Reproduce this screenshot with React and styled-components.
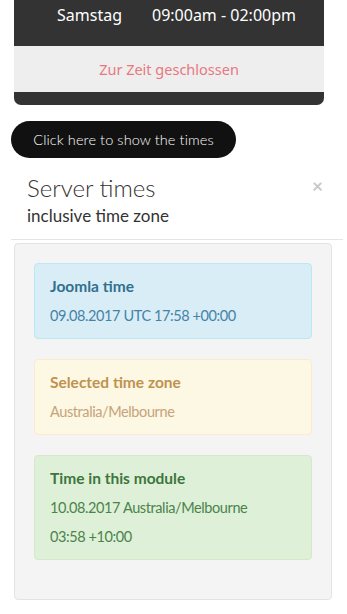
import styled, { createGlobalStyle } from "styled-components";

const Global = createGlobalStyle`
  body {
    margin: 0;
    background: #fff;
    font-family: Lato, "Open Sans", sans-serif;
  }
`;

const Page = styled.div`
  width: 347px;
  display: flex;
  flex-direction: column;
`;

const Hours = styled.div`
  margin: 0 23px 0 14px;
  background: #333;
  border-radius: 0 0 7px 7px;
  padding-bottom: 13px;
  font-family: "Noto Sans", "Open Sans", sans-serif;
`;

const HoursRow = styled.div`
  height: 46px;
  display: flex;
  align-items: flex-start;
  padding-top: 4px;
  box-sizing: border-box;
  color: #fff;
  font-size: 16px;
  line-height: 22px;

  span:first-child {
    width: 95px;
    padding-left: 43px;
  }
`;

const Closed = styled.div`
  height: 46px;
  background: #eee;
  color: #e8787e;
  font-size: 14.5px;
  display: flex;
  align-items: center;
  justify-content: center;
`;

const ShowButton = styled.button`
  align-self: flex-start;
  margin: 16px 0 0 11px;
  height: 37px;
  width: 225px;
  padding: 0;
  border: none;
  border-radius: 19px;
  background: #111;
  color: #fff;
  font-family: Lato, sans-serif;
  font-size: 14.5px;
  font-weight: 300;
  letter-spacing: 0.1px;
`;

const Header = styled.div`
  position: relative;
  margin: 15px 4px 0 11px;
  padding: 0 16px 12px;
  border-bottom: 1px solid #e5e5e5;
`;

const Title = styled.h2`
  margin: 0;
  font-size: 24px;
  font-weight: 300;
  line-height: 30px;
  color: #333;
`;

const Subtitle = styled.div`
  margin-top: 2px;
  font-size: 17px;
  line-height: 22px;
  color: #333;
`;

const Close = styled.span`
  position: absolute;
  top: 1px;
  right: 20px;
  font-size: 19px;
  font-weight: 700;
  color: #c8c8c8;
`;

const Well = styled.div`
  margin: 3px 15px 0 14px;
  padding: 19px;
  background: #f4f4f4;
  border: 1px solid #e3e3e3;
  border-radius: 4px;
  display: flex;
  flex-direction: column;
  gap: 20px;
`;

const tones = {
  info: { bg: "#d9edf7", border: "#bce8f1", title: "#31708f", text: "#4583a6" },
  warning: { bg: "#fcf8e3", border: "#faebcc", title: "#c0914f", text: "#c6a47a" },
  success: { bg: "#dff0d8", border: "#d6e9c6", title: "#3c763d", text: "#4a844b" },
};

const Alert = styled.div`
  padding: 8px 15px;
  background: ${(p) => tones[p.$tone].bg};
  border: 1px solid ${(p) => tones[p.$tone].border};
  border-radius: 4px;
  margin-bottom: ${(p) => (p.$last ? "20px" : "0")};

  strong {
    display: block;
    font-size: 15.5px;
    font-weight: 700;
    line-height: 29px;
    color: ${(p) => tones[p.$tone].title};
  }

  div {
    font-size: 14.5px;
    font-weight: 400;
    letter-spacing: -0.4px;
    line-height: 29px;
    color: ${(p) => tones[p.$tone].text};
  }
`;

export default function App() {
  return (
    <Page>
      <Global />
      <Hours>
        <HoursRow>
          <span>Samstag</span>
          <span>09:00am - 02:00pm</span>
        </HoursRow>
        <Closed>Zur Zeit geschlossen</Closed>
      </Hours>
      <ShowButton>Click here to show the times</ShowButton>
      <Header>
        <Title>Server times</Title>
        <Subtitle>inclusive time zone</Subtitle>
        <Close>×</Close>
      </Header>
      <Well>
        <Alert $tone="info">
          <strong>Joomla time</strong>
          <div>09.08.2017 UTC 17:58 +00:00</div>
        </Alert>
        <Alert $tone="warning">
          <strong>Selected time zone</strong>
          <div>Australia/Melbourne</div>
        </Alert>
        <Alert $tone="success" $last>
          <strong>Time in this module</strong>
          <div>10.08.2017 Australia/Melbourne</div>
          <div>03:58 +10:00</div>
        </Alert>
      </Well>
    </Page>
  );
}
